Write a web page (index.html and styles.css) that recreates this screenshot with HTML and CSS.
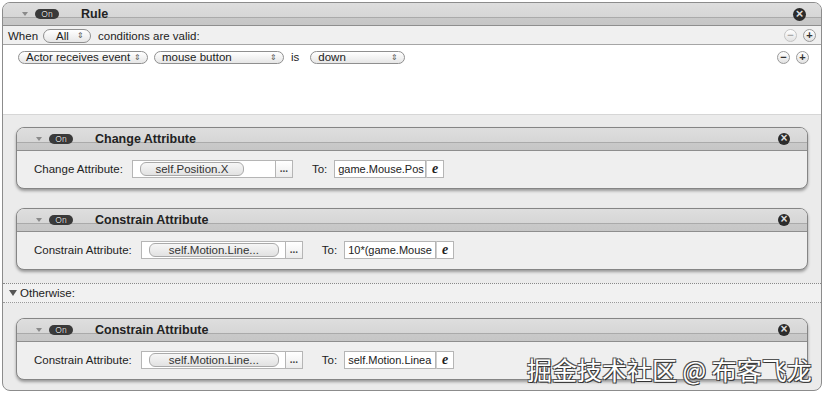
FILE: index.html
```html
<!DOCTYPE html>
<html lang="en">
<head>
  <meta charset="UTF-8">
  <title>Rule</title>
  <link rel="stylesheet" href="styles.css">
</head>
<body>

  <div class="rule">
    <div class="bar rule-bar">
      <span class="tri"></span>
      <span class="on">On</span>
      <span class="title">Rule</span>
      <span class="close">&times;</span>
    </div>

    <div class="when-row">
      <span>When</span>
      <span class="pop pop-all">All <i class="arr">&#8661;</i></span>
      <span>conditions are valid:</span>
      <span class="pm">
        <span class="round off">&minus;</span>
        <span class="round">+</span>
      </span>
    </div>

    <div class="conds">
      <div class="cond-row">
        <span class="pop pop-event">Actor receives event <i class="arr">&#8661;</i></span>
        <span class="pop pop-mouse">mouse button <i class="arr">&#8661;</i></span>
        <span class="is">is</span>
        <span class="pop pop-down">down <i class="arr">&#8661;</i></span>
        <span class="pm">
          <span class="round">&minus;</span>
          <span class="round">+</span>
        </span>
      </div>
    </div>

    <div class="actions">
      <div class="card">
        <div class="bar card-bar">
          <span class="tri"></span>
          <span class="on">On</span>
          <span class="title">Change Attribute</span>
          <span class="close">&times;</span>
        </div>
        <div class="card-body">
          <span class="lbl">Change Attribute:</span>
          <span class="field f-short"><span class="chip c-short">self.Position.X</span></span>
          <span class="dots">...</span>
          <span class="to">To:</span>
          <span class="expr">game.Mouse.Pos</span>
          <span class="ebtn">e</span>
        </div>
      </div>

      <div class="card">
        <div class="bar card-bar">
          <span class="tri"></span>
          <span class="on">On</span>
          <span class="title">Constrain Attribute</span>
          <span class="close">&times;</span>
        </div>
        <div class="card-body">
          <span class="lbl">Constrain Attribute:</span>
          <span class="field"><span class="chip">self.Motion.Line...</span></span>
          <span class="dots">...</span>
          <span class="to">To:</span>
          <span class="expr">10*(game.Mouse</span>
          <span class="ebtn">e</span>
        </div>
      </div>
    </div>

    <div class="otherwise">
      <span class="tri tri-dark"></span>
      <span>Otherwise:</span>
    </div>

    <div class="actions actions-else">
      <div class="card">
        <div class="bar card-bar">
          <span class="tri"></span>
          <span class="on">On</span>
          <span class="title">Constrain Attribute</span>
          <span class="close">&times;</span>
        </div>
        <div class="card-body">
          <span class="lbl">Constrain Attribute:</span>
          <span class="field"><span class="chip">self.Motion.Line...</span></span>
          <span class="dots">...</span>
          <span class="to">To:</span>
          <span class="expr">self.Motion.Linea</span>
          <span class="ebtn">e</span>
        </div>
      </div>
    </div>
  </div>

  <div class="watermark">掘金技术社区 @ 布客飞龙</div>

</body>
</html>
```

FILE: styles.css
```css
body {
  margin: 0;
  padding: 0;
  background: #fff;
  font-family: "Liberation Sans", Arial, sans-serif;
  font-size: 11.5px;
  color: #222;
  width: 826px;
  height: 394px;
  overflow: hidden;
  position: relative;
}

.rule {
  margin: 2px 4px 0 2px;
  height: 387px;
  border: 1px solid #8c8c8c;
  border-radius: 8px;
  background: #ebebeb;
  overflow: hidden;
}

/* header bars */
.bar {
  display: flex;
  align-items: center;
  height: 22px;
  border-bottom: 1px solid #8e8e8e;
  background: linear-gradient(#dedede 0, #d6d6d6 14px, #aaa 14px, #aaa 15px, #c9c9c9 15px, #c6c6c6 100%);
}
.rule-bar { padding-left: 19px; }
.card-bar { padding-left: 19px; border-radius: 7px 7px 0 0; }

.tri {
  width: 0;
  height: 0;
  border-left: 3px solid transparent;
  border-right: 3px solid transparent;
  border-top: 4px solid #8a8a8a;
  margin-right: 7px;
}
.tri-dark { border-top-color: #555; border-left-width: 4px; border-right-width: 4px; border-top-width: 6px; margin-right: 3px; }

.on {
  width: 24px;
  height: 10px;
  border-radius: 5px;
  background: #3a3a3a;
  color: #ddd;
  font-size: 8.5px;
  line-height: 10px;
  text-align: center;
  text-shadow: 0 0 1px #000;
}
.title {
  font-weight: bold;
  font-size: 12.5px;
  color: #222;
  margin-left: 22px;
  flex: 1;
}
.close {
  width: 13px;
  height: 13px;
  border-radius: 50%;
  background: #2b2b2b;
  color: #ddd;
  font-size: 13px;
  font-weight: bold;
  line-height: 12px;
  text-align: center;
  margin-right: 15px;
}
.card-bar .close { width: 12px; height: 12px; line-height: 11px; font-size: 12px; margin-right: 17px; }

/* when row */
.when-row {
  display: flex;
  align-items: center;
  height: 17px;
  padding-left: 5px;
  padding-top: 1px;
  background: #f0f0f0;
  border-bottom: 1px solid #a5a5a5;
}
.when-row .pop { margin: 0 7px 0 5px; }

.pop {
  display: inline-flex;
  align-items: center;
  justify-content: space-between;
  height: 13px;
  padding: 0 6px 0 7px;
  border: 1px solid #8f8f8f;
  border-radius: 7px;
  background: linear-gradient(#fff, #e6e6e6);
  box-sizing: border-box;
  font-size: 11.5px;
}
.arr { font-style: normal; font-size: 8px; color: #555; }
.pop-all { width: 48px; height: 14px; padding-left: 12px; }
.pop-event { width: 130px; }
.pop-mouse { width: 130px; margin-left: 6px; }
.pop-down { width: 95px; }
.is { margin: 0 11px 0 7px; }

.pm { margin-left: auto; display: flex; gap: 6px; margin-right: 5px; }
.round {
  width: 13px;
  height: 13px;
  box-sizing: border-box;
  border-radius: 50%;
  border: 1px solid #9a9a9a;
  background: linear-gradient(#fff, #e2e2e2);
  font-size: 11px;
  font-weight: bold;
  line-height: 11px;
  text-align: center;
  color: #333;
}
.round.off { color: #aaa; border-color: #c4c4c4; }

/* conditions */
.conds {
  height: 69px;
  background: #fff;
  border-bottom: 1px solid #d6d6d6;
}
.cond-row {
  display: flex;
  align-items: center;
  height: 22px;
  padding-left: 15px;
  padding-top: 1px;
}
.cond-row .pm { margin-right: 12px; }

/* actions */
.actions { padding: 12px 13px 13px 13px; }
.actions-else { padding-top: 15px; }
.card {
  border: 1px solid #858585;
  border-radius: 8px;
  background: #efefef;
  box-shadow: 0 2px 3px rgba(0, 0, 0, 0.35);
}
.card + .card { margin-top: 19px; }

.card-body {
  display: flex;
  align-items: center;
  height: 37px;
  padding-left: 17px;
  padding-bottom: 1px;
  box-sizing: border-box;
}
.lbl { margin-right: 9px; }
.field {
  display: flex;
  align-items: center;
  width: 145px;
  height: 18px;
  box-sizing: border-box;
  border: 1px solid #b5b5b5;
  background: #fff;
  padding-left: 7px;
}
.f-short { width: 144px; }
.chip {
  width: 128px;
  height: 12px;
  border: 1px solid #aaa;
  border-radius: 6px;
  background: linear-gradient(#f6f6f6, #e2e2e2);
  text-align: center;
  line-height: 12px;
  font-size: 11.5px;
  color: #333;
}
.c-short { width: 102px; }
.dots {
  width: 17px;
  height: 18px;
  box-sizing: border-box;
  border: 1px solid #b5b5b5;
  border-left: none;
  background: linear-gradient(#fff, #ececec);
  text-align: center;
  line-height: 16px;
  font-size: 10px;
  font-weight: bold;
  color: #444;
}
.to { margin: 0 7px 0 19px; }
.expr {
  width: 92px;
  height: 18px;
  box-sizing: border-box;
  border: 1px solid #b5b5b5;
  background: #fff;
  padding-left: 3px;
  line-height: 16px;
  font-size: 11px;
  white-space: nowrap;
  overflow: hidden;
}
.ebtn {
  width: 18px;
  height: 18px;
  box-sizing: border-box;
  border: 1px solid #b5b5b5;
  border-left: 1px solid #d0d0d0;
  background: #fff;
  text-align: center;
  font-family: "Liberation Serif", serif;
  font-style: italic;
  font-weight: bold;
  font-size: 14px;
  line-height: 15px;
  color: #222;
}

/* otherwise */
.otherwise {
  display: flex;
  align-items: center;
  height: 18px;
  padding-left: 6px;
  background: #f1f1f1;
  border-top: 1px dotted #888;
  border-bottom: 1px dotted #999;
}

.watermark {
  position: absolute;
  left: 527px;
  top: 351px;
  font-family: "Noto Sans CJK SC", sans-serif;
  font-size: 25px;
  color: #fff;
  text-shadow: 1px 1px 0 #333, -1px -1px 0 #555, 1px -1px 0 #555, -1px 1px 0 #555;
  white-space: nowrap;
}
```
